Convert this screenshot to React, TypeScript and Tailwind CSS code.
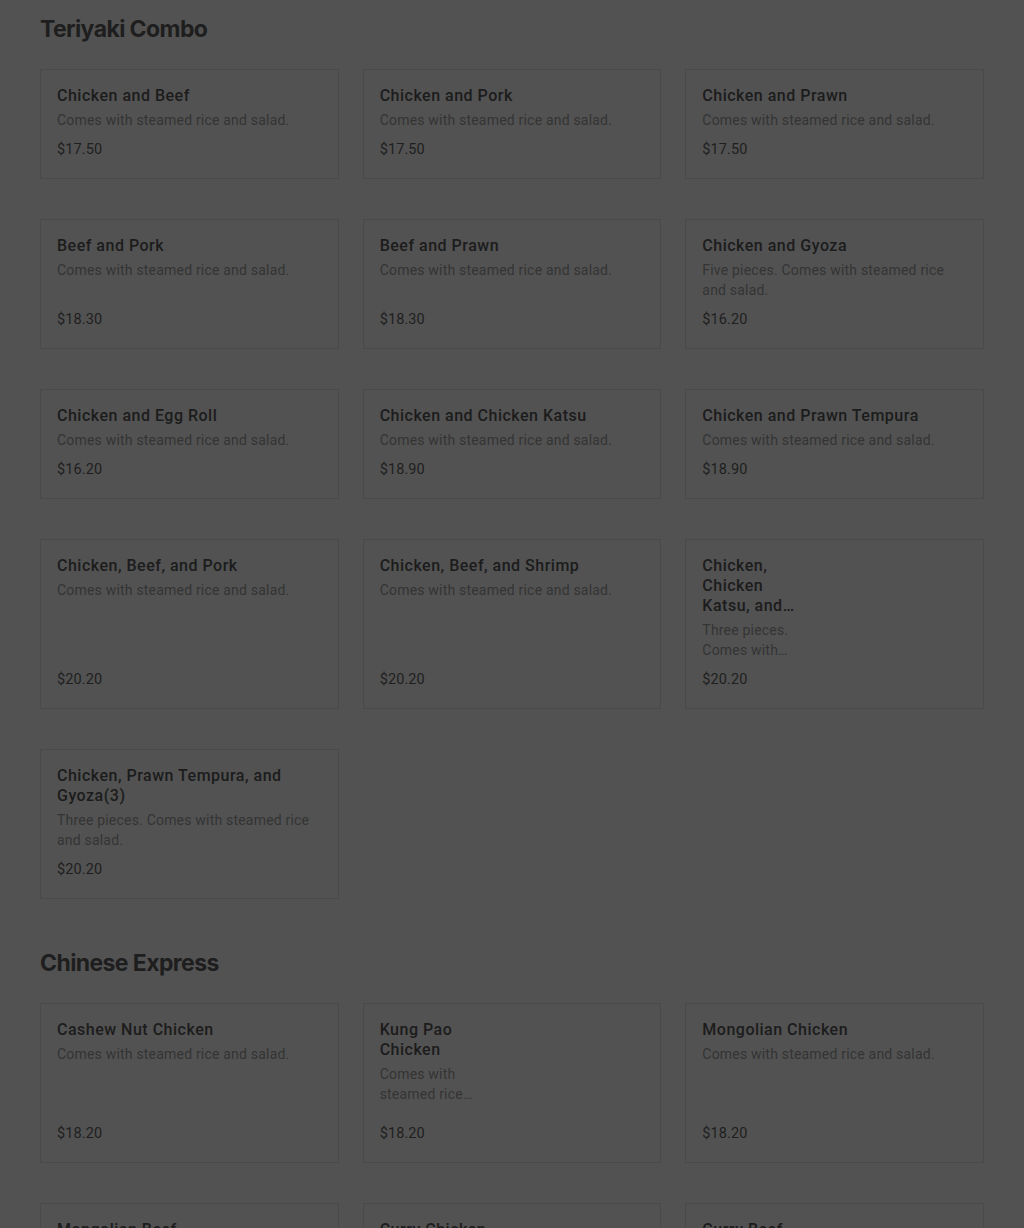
type Item = {
  name: string
  desc: string
  price: string
  image?: boolean
}

const TERIYAKI: Item[] = [
  { name: 'Chicken and Beef', desc: 'Comes with steamed rice and salad.', price: '$17.50' },
  { name: 'Chicken and Pork', desc: 'Comes with steamed rice and salad.', price: '$17.50' },
  { name: 'Chicken and Prawn', desc: 'Comes with steamed rice and salad.', price: '$17.50' },
  { name: 'Beef and Pork', desc: 'Comes with steamed rice and salad.', price: '$18.30' },
  { name: 'Beef and Prawn', desc: 'Comes with steamed rice and salad.', price: '$18.30' },
  { name: 'Chicken and Gyoza', desc: 'Five pieces. Comes with steamed rice and salad.', price: '$16.20' },
  { name: 'Chicken and Egg Roll', desc: 'Comes with steamed rice and salad.', price: '$16.20' },
  { name: 'Chicken and Chicken Katsu', desc: 'Comes with steamed rice and salad.', price: '$18.90' },
  { name: 'Chicken and Prawn Tempura', desc: 'Comes with steamed rice and salad.', price: '$18.90' },
  { name: 'Chicken, Beef, and Pork', desc: 'Comes with steamed rice and salad.', price: '$20.20' },
  { name: 'Chicken, Beef, and Shrimp', desc: 'Comes with steamed rice and salad.', price: '$20.20' },
  {
    name: 'Chicken, Chicken Katsu, and Prawn Tempura',
    desc: 'Three pieces. Comes with steamed rice and salad.',
    price: '$20.20',
    image: true,
  },
  {
    name: 'Chicken, Prawn Tempura, and Gyoza(3)',
    desc: 'Three pieces. Comes with steamed rice and salad.',
    price: '$20.20',
  },
]

const CHINESE: Item[] = [
  { name: 'Cashew Nut Chicken', desc: 'Comes with steamed rice and salad.', price: '$18.20' },
  { name: 'Kung Pao Chicken', desc: 'Comes with steamed rice and salad.', price: '$18.20', image: true },
  { name: 'Mongolian Chicken', desc: 'Comes with steamed rice and salad.', price: '$18.20' },
  { name: 'Mongolian Beef', desc: 'Comes with steamed rice and salad.', price: '$18.20' },
  { name: 'Curry Chicken', desc: 'Comes with steamed rice and salad.', price: '$18.20' },
  { name: 'Curry Beef', desc: 'Comes with steamed rice and salad.', price: '$18.20' },
]

function ItemCard({ item }: { item: Item }) {
  return (
    <div className="flex border border-[#4a4a4a] bg-[#525252]">
      <div className="flex min-w-0 flex-1 flex-col pl-4 pr-4 pt-4 pb-[18px]">
        <div className="line-clamp-3 text-[16px] leading-5 font-medium tracking-[0.5px] text-[#1c1c1c]">
          {item.name}
        </div>
        <div className="mt-1 line-clamp-2 text-[14px] leading-5 tracking-[0.2px] text-[#343434]">{item.desc}</div>
        <div className="mt-auto pt-[10px] text-[14.5px] leading-5 tracking-[0.1px] text-[#1f1f1f]">{item.price}</div>
      </div>
      {/* image slot, empty while the photo hasn't loaded */}
      {item.image && <div className="h-[158px] w-[160px] shrink-0" />}
    </div>
  )
}

function Section({ title, items }: { title: string; items: Item[] }) {
  return (
    <section>
      <h2 className="font-['Inter',sans-serif] text-[23px] leading-8 font-bold tracking-[-0.6px] text-[#1e1e1e]">
        {title}
      </h2>
      <div className="mt-[24px] grid grid-cols-3 gap-x-6 gap-y-10">
        {items.map((item) => (
          <ItemCard key={item.name} item={item} />
        ))}
      </div>
    </section>
  )
}

export default function App() {
  return (
    <div className="min-h-screen bg-[#525252] px-10 pt-[13px] pb-10 font-['Roboto',sans-serif]">
      <div className="flex flex-col gap-12">
        <Section title="Teriyaki Combo" items={TERIYAKI} />
        <Section title="Chinese Express" items={CHINESE} />
      </div>
    </div>
  )
}
